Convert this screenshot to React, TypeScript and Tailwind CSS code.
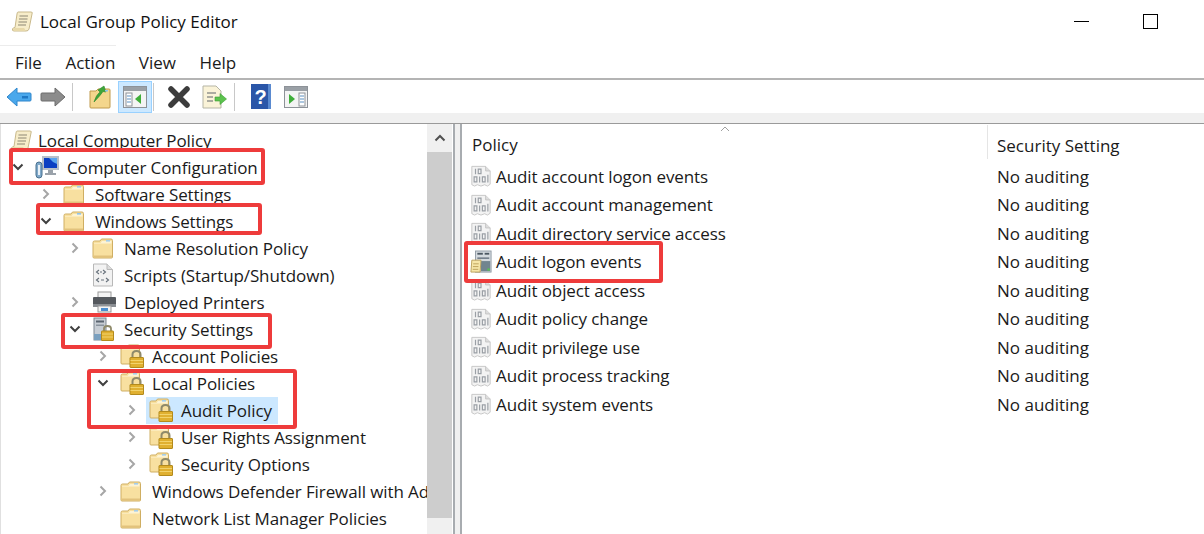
import type { ReactNode } from "react";

function Folder({ open = false }: { open?: boolean }) {
  return (
    <svg width="22" height="21" viewBox="0 0 22 21">
      <path d="M1 4.5 Q1 3 2.5 3 H8 L9.5 1 H19 Q20.5 1 20.5 2.5 V19 Q20.5 20 19.5 20 H2 Q1 20 1 19 Z" fill="#f8e0a0" stroke="#cfae62" />
      <path d="M2 5 H8.5 L10 3 H19.5 V5.5 H2 Z" fill="#fdf3d3" />
      <rect x="14" y="2" width="4" height="1.6" fill={open ? "#8fc4ec" : "#a4cdea"} />
      <rect x="1.5" y="17.5" width="18.5" height="2" fill="#e2c27c" />
    </svg>
  );
}

function LockFolder() {
  return (
    <svg width="25" height="24" viewBox="0 0 25 24">
      <path d="M1 4.5 Q1 3 2.5 3 H7 L8.5 1 H18 Q19.5 1 19.5 2.5 V19 Q19.5 20 18.5 20 H2 Q1 20 1 19 Z" fill="#f8e0a0" stroke="#cfae62" />
      <path d="M2 5 H7.5 L9 3 H18.5 V5.5 H2 Z" fill="#fdf3d3" />
      <rect x="13" y="2" width="4" height="1.6" fill="#a4cdea" />
      <path d="M12.5 14 V10.5 Q12.5 7 16.5 7 Q20.5 7 20.5 10.5 V14" fill="none" stroke="#8f8a6a" strokeWidth="2" />
      <rect x="10" y="13.5" width="13.5" height="10" rx="0.5" fill="#e0b030" stroke="#b38a1c" />
      <path d="M10.5 16.5 H23 M10.5 19.5 H23" stroke="#f2d36c" />
    </svg>
  );
}

function Scroll() {
  return (
    <svg width="23" height="23" viewBox="0 0 23 23">
      <path d="M7 2 H20 Q22 2 21 4 L18 19 Q17.5 21 15 21 H3 Q1 21 1.5 19 Q2 17.5 4 17.5 L6 4 Q6.2 2 7 2 Z" fill="#f7edca" stroke="#c9b98c" />
      <path d="M8.5 6 H17 M8 9 H16.5 M7.5 12 H16 M7 15 H15" stroke="#8d8874" strokeWidth="1.1" />
      <path d="M2 19 Q3 17.5 5 18 L13 18 Q14.5 19 14 21 H3 Z" fill="#e8d9aa" />
    </svg>
  );
}

function Computer() {
  return (
    <svg width="25" height="24" viewBox="0 0 25 24">
      <rect x="7" y="1" width="17" height="14" fill="#b9c0c8" />
      <rect x="9" y="3" width="13" height="10" fill="#0b3fc2" />
      <path d="M14 3 H22 V9 Q17 7 14 3 Z" fill="#5aa4ee" />
      <path d="M13 15 H18 V18 H21 V20 H10 V18 H13 Z" fill="#9aa2aa" />
      <rect x="1" y="7" width="6" height="16" rx="3" fill="#7fa8c9" stroke="#49708f" />
      <rect x="3" y="10" width="2" height="10" fill="#e8f0f7" />
    </svg>
  );
}

function ScriptIcon() {
  return (
    <svg width="22" height="24" viewBox="0 0 22 24">
      <path d="M1.5 1 H15 L20.5 6.5 V23 H1.5 Z" fill="#f2f2f2" stroke="#b8b8b8" />
      <path d="M15 1 V6.5 H20.5" fill="#dcdcdc" stroke="#b8b8b8" />
      <path d="M7 7 L4.5 9 L7 11 M11 7 L13.5 9 L11 11 M8 9 H10 M7 15 L4.5 17 L7 19 M14 15 L16.5 17 L14 19 M9 17 H12" fill="none" stroke="#66707a" strokeWidth="1.1" />
    </svg>
  );
}

function Printer() {
  return (
    <svg width="25" height="22" viewBox="0 0 25 22">
      <rect x="6" y="1" width="13" height="6" fill="#f4f4f4" stroke="#9a9a9a" />
      <rect x="1" y="6" width="23" height="9" rx="1" fill="#55595e" />
      <rect x="1" y="13" width="23" height="3" fill="#8a8e93" />
      <rect x="6" y="15" width="13" height="6" fill="#f4f4f4" stroke="#9a9a9a" />
      <rect x="9" y="17" width="7" height="3" fill="#4d8fd0" />
    </svg>
  );
}

function ServerLock() {
  return (
    <svg width="24" height="25" viewBox="0 0 24 25">
      <rect x="2" y="1" width="12" height="22" fill="#c7cdd4" stroke="#7e8791" />
      <rect x="4" y="3.5" width="8" height="2" fill="#5b6570" />
      <rect x="4" y="7.5" width="8" height="1.5" fill="#8a939d" />
      <path d="M2 17 H9 V23 H2 Z" fill="#7aa0bf" />
      <path d="M12 14 V11.5 Q12 9 15.5 9 Q19 9 19 11.5 V14" fill="none" stroke="#8f8a6a" strokeWidth="1.8" />
      <rect x="9.5" y="14" width="12" height="9.5" rx="0.5" fill="#e0b030" stroke="#b38a1c" />
      <path d="M10 17 H21 M10 20 H21" stroke="#f2d36c" />
    </svg>
  );
}

function BinaryDoc() {
  return (
    <svg width="24" height="24" viewBox="0 0 24 24">
      <path d="M2 1.5 H17 L22 6.5 V21 L19 23 L16 21.5 L12 23 L8 21.5 L5 23 L2 21.5 Z" fill="#f3f3f3" stroke="#c4c4c4" />
      <path d="M17 1.5 V6.5 H22" fill="#dedede" stroke="#c4c4c4" />
      <path d="M6 4 V10 M9 4.5 H12 V9.5 H9 Z M4.5 13 H7.5 V18.5 H4.5 Z M10.5 12.5 V19 M13.5 13 H16.5 V18.5 H13.5 Z M19.5 10.5 V19" fill="none" stroke="#9a9fa5" strokeWidth="1.3" />
    </svg>
  );
}

function LogonIcon() {
  return (
    <svg width="24" height="26" viewBox="0 0 24 26">
      <rect x="6" y="1" width="17" height="23" fill="#d3d9de" stroke="#8f99a3" />
      <rect x="8" y="3" width="6" height="2" fill="#4b5762" />
      <rect x="16" y="3" width="5" height="2" fill="#4b5762" />
      <rect x="8" y="8" width="13" height="1.6" fill="#6a7682" />
      <rect x="12" y="12" width="10" height="11" fill="#71858f" />
      <rect x="19" y="20" width="2.5" height="2.5" fill="#56c255" />
      <path d="M2 11 H12 L11 24 H1 Z" fill="#f6e6a8" stroke="#b99f58" />
      <path d="M3.5 15 H9.5 M3.2 18 H9.2 M3 21 H9" stroke="#b99f58" />
    </svg>
  );
}

type Level = 1 | 2 | 3 | 4 | 5;
const indent: Record<Level, string> = {
  1: "pl-[9px]",
  2: "pl-[37px]",
  3: "pl-[66px]",
  4: "pl-[94px]",
  5: "pl-[123px]",
};

function Chevron({ kind }: { kind?: "open" | "closed" }) {
  if (kind === "open")
    return (
      <svg width="16" height="16" viewBox="0 0 16 16">
        <path d="M3.5 5.5 L8 10 L12.5 5.5" fill="none" stroke="#404040" strokeWidth="2" />
      </svg>
    );
  if (kind === "closed")
    return (
      <svg width="16" height="16" viewBox="0 0 16 16">
        <path d="M5.5 3.5 L10 8 L5.5 12.5" fill="none" stroke="#a6a6a6" strokeWidth="2" />
      </svg>
    );
  return null;
}

function Row({ level, chevron, icon, label, selected }: { level: Level; chevron?: "open" | "closed"; icon: ReactNode; label?: string; selected?: boolean }) {
  return (
    <div className={`flex items-center h-[27px] whitespace-nowrap ${indent[level]}`}>
      <div className="w-[25px] shrink-0 flex items-center">
        <Chevron kind={chevron} />
      </div>
      <div className={`flex items-center h-[27px] ${selected ? "bg-[#cce8ff] pr-[6px] -ml-[3px] pl-[3px]" : ""}`}>
        <div className="w-[32px] shrink-0 flex items-center">{icon}</div>
        {label && <span>{label}</span>}
      </div>
    </div>
  );
}

function RedBox({ className }: { className: string }) {
  return <div className={`absolute border-[4px] border-[#ee3b3b] rounded-[3px] pointer-events-none ${className}`} />;
}

const policies = [
  "Audit account logon events",
  "Audit account management",
  "Audit directory service access",
  "Audit logon events",
  "Audit object access",
  "Audit policy change",
  "Audit privilege use",
  "Audit process tracking",
  "Audit system events",
];

export default function App() {
  return (
    <div className="relative w-[1204px] h-[534px] overflow-hidden bg-white text-[17px] leading-none text-[#1a1a1a] font-['Open_Sans',sans-serif] flex flex-col">
      {/* title bar */}
      <div className="h-[45px] shrink-0 flex items-center pl-[11px] pr-[46px] pb-[2px]">
        <Scroll />
        <span className="ml-[6px] text-[#111]">Local Group Policy Editor</span>
        <div className="ml-auto flex items-center gap-[54px]">
          <div className="w-[15px] h-[1px] bg-black" />
          <div className="w-[15px] h-[15px] border-[1.5px] border-black" />
        </div>
      </div>
      {/* menu */}
      <div className="h-[35px] shrink-0 border-b-2 border-[#b4b4b4] relative">
        <div className="absolute left-0 top-0 w-[116px] h-[1px] bg-[#ececec]" />
        <div className="flex items-center h-full pl-[15px] pt-[2px] gap-[23.5px]">
          <span>File</span>
          <span>Action</span>
          <span>View</span>
          <span>Help</span>
        </div>
      </div>
      {/* toolbar */}
      <div className="h-[33px] shrink-0 flex items-center pl-[6px]">
        <svg width="26" height="20" viewBox="0 0 26 20">
          <path d="M1 10 L11 1 V6 H24 Q25 6 25 7 V13 Q25 14 24 14 H11 V19 Z" fill="#4aa8ec" stroke="#2f86cc" />
          <rect x="16" y="9" width="6" height="2.5" fill="#1f78c4" />
        </svg>
        <svg width="26" height="20" viewBox="0 0 26 20" className="ml-[8px]">
          <path d="M25 10 L15 1 V6 H2 Q1 6 1 7 V13 Q1 14 2 14 H15 V19 Z" fill="#8c8c8c" stroke="#6c6c6c" />
        </svg>
        <div className="ml-[6px] w-[1px] h-[28px] bg-[#c8c8c8]" />
        <svg width="22" height="24" viewBox="0 0 22 24" className="ml-[16px]">
          <path d="M1 6 H7 L9 4 H20 Q21 4 21 5 V22 Q21 23 20 23 H2 Q1 23 1 22 Z" fill="#f4d68c" stroke="#c09a4c" />
          <path d="M5 17 Q7 10 11 7 L9 5 L15 1 L17 7 L14 6.5 Q11 11 5 17 Z" fill="#3fa53a" stroke="#2d8a2a" strokeWidth="0.6" />
          <rect x="16" y="5" width="3" height="1.5" fill="#8fc4ec" />
        </svg>
        <div className="ml-[7px] w-[34px] h-[32px] bg-[#cce8ff] border border-[#99d1ff] flex items-center justify-center">
          <svg width="24" height="22" viewBox="0 0 24 22">
            <rect x="0.5" y="0.5" width="23" height="21" fill="#f4f4f4" stroke="#8d9298" />
            <rect x="1" y="1" width="22" height="4" fill="#9aa0a6" />
            <rect x="3" y="7" width="6" height="13" fill="#fff" stroke="#8d9298" />
            <path d="M4 10 H8 M4 13 H8 M4 16 H8" stroke="#5b8fc0" />
            <path d="M18 8 V18 L12 13 Z" fill="#3fae3a" />
          </svg>
        </div>
        <div className="w-[1px] h-[28px] bg-[#c8c8c8] ml-[1px]" />
        <svg width="24" height="24" viewBox="0 0 24 24" className="ml-[13px]">
          <path d="M4 4 L20 20 M20 4 L4 20" stroke="#3c3c3c" strokeWidth="5.5" strokeLinecap="round" />
        </svg>
        <svg width="25" height="24" viewBox="0 0 25 24" className="ml-[11px]">
          <path d="M1 1 H14 L19 6 V23 H1 Z" fill="#faf3d8" stroke="#b5b5a5" />
          <path d="M5 8 H14 M5 12 H11 M5 16 H11" stroke="#5f6468" strokeWidth="1.2" />
          <path d="M13 12 H18 V8.5 L24.5 14 L18 19.5 V16 H13 Z" fill="#5cc24e" stroke="#3c9f33" strokeWidth="0.6" />
        </svg>
        <div className="ml-[7px] w-[1px] h-[28px] bg-[#c8c8c8]" />
        <svg width="20" height="25" viewBox="0 0 20 25" className="ml-[16px]">
          <rect width="20" height="25" fill="#2a56a8" />
          <rect x="17" width="3" height="25" fill="#5a8ad0" />
          <text x="9.5" y="19.5" textAnchor="middle" fontSize="20" fontWeight="700" fill="#fff" fontFamily="Liberation Sans">?</text>
        </svg>
        <svg width="24" height="22" viewBox="0 0 24 22" className="ml-[13px]">
          <rect x="0.5" y="0.5" width="23" height="21" fill="#f4f4f4" stroke="#8d9298" />
          <rect x="1" y="1" width="22" height="4" fill="#9aa0a6" />
          <rect x="15" y="7" width="6" height="13" fill="#fff" stroke="#8d9298" />
          <path d="M16 10 H20 M16 13 H20 M16 16 H20" stroke="#5b8fc0" />
          <path d="M5 8 V18 L11 13 Z" fill="#3fae3a" />
        </svg>
      </div>
      <div className="h-[10px] shrink-0 bg-[#f0f0f0] border-b border-[#9a9a9a] box-content" />
      {/* panes */}
      <div className="flex-1 flex min-h-0 bg-[#f0f0f0]">
        <div className="w-[455px] shrink-0 bg-white border-r-2 border-[#a8acb0] flex border-l border-l-[#e0e0e0]">
          <div className="w-[426px] shrink-0 overflow-hidden pt-[2.5px] tracking-[-0.1px]">
            <div className="flex items-center h-[27px] pl-[9px] whitespace-nowrap">
              <div className="w-[28px]"><Scroll /></div>
              <span>Local Computer Policy</span>
            </div>
            <Row level={1} chevron="open" icon={<Computer />} label="Computer Configuration" />
            <Row level={2} chevron="closed" icon={<Folder />} label="Software Settings" />
            <Row level={2} chevron="open" icon={<Folder open />} label="Windows Settings" />
            <Row level={3} chevron="closed" icon={<Folder />} label="Name Resolution Policy" />
            <Row level={3} icon={<ScriptIcon />} label="Scripts (Startup/Shutdown)" />
            <Row level={3} chevron="closed" icon={<Printer />} label="Deployed Printers" />
            <Row level={3} chevron="open" icon={<ServerLock />} label="Security Settings" />
            <Row level={4} chevron="closed" icon={<LockFolder />} label="Account Policies" />
            <Row level={4} chevron="open" icon={<LockFolder />} label="Local Policies" />
            <Row level={5} chevron="closed" icon={<LockFolder />} label="Audit Policy" selected />
            <Row level={5} chevron="closed" icon={<LockFolder />} label="User Rights Assignment" />
            <Row level={5} chevron="closed" icon={<LockFolder />} label="Security Options" />
            <Row level={4} chevron="closed" icon={<Folder />} label="Windows Defender Firewall with Advanced Security" />
            <Row level={4} icon={<Folder />} label="Network List Manager Policies" />
            <Row level={4} icon={<Folder />} />
          </div>
          <div className="w-[25px] shrink-0 bg-[#f0f0f0] flex flex-col">
            <div className="h-[28px] shrink-0 flex items-center justify-center">
              <svg width="12" height="8" viewBox="0 0 12 8">
                <path d="M1.5 6.5 L6 2 L10.5 6.5" fill="none" stroke="#505050" strokeWidth="2" />
              </svg>
            </div>
            <div className="h-[366px] shrink-0 bg-[#cdcdcd]" />
          </div>
        </div>
        <div className="flex-1 ml-[5px] bg-white border-l-2 border-[#a8acb0] relative">
          <div className="grid grid-cols-[525px_1fr] h-[36px] items-center">
            <div className="pl-[10px] pt-[4px]">Policy</div>
            <div className="h-[34px] border-l border-[#e5e5e5] pl-[9px] pt-[12px]">Security Setting</div>
          </div>
          <svg width="10" height="6" viewBox="0 0 10 6" className="absolute left-[258px] top-[2px]">
            <path d="M1 5 L5 1 L9 5" fill="none" stroke="#a0a0a0" />
          </svg>
          <div className="grid grid-cols-[526px_1fr] pt-[2px]">
            {policies.map((p) => (
              <div key={p} className="contents">
                <div className="h-[28.5px] flex items-center pl-[8px] gap-[4px] tracking-[-0.1px]">
                  <div className="w-[22px] shrink-0 flex items-center">{p === "Audit logon events" ? <LogonIcon /> : <BinaryDoc />}</div>
                  <span>{p}</span>
                </div>
                <div className="h-[28.5px] flex items-center pl-[9px]">No auditing</div>
              </div>
            ))}
          </div>
        </div>
      </div>
      {/* annotations drawn over the screenshot */}
      <RedBox className="left-[9px] top-[148px] w-[256px] h-[37px]" />
      <RedBox className="left-[36px] top-[203px] w-[226px] h-[32px]" />
      <RedBox className="left-[61px] top-[313px] w-[211px] h-[36px]" />
      <RedBox className="left-[87px] top-[369px] w-[210px] h-[60px]" />
      <RedBox className="left-[464px] top-[241px] w-[199px] h-[42px]" />
    </div>
  );
}
